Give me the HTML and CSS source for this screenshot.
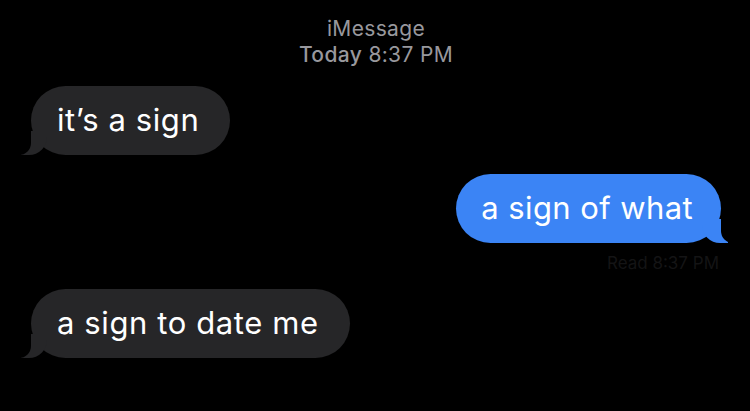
FILE: index.html
```html
<!DOCTYPE html>
<html lang="en">
<head>
<meta charset="utf-8">
<title>iMessage</title>
<link rel="stylesheet" href="styles.css">
</head>
<body>
<div class="thread">
  <header class="meta">
    <div class="service">iMessage</div>
    <div class="time"><span class="day">Today</span> 8:37 PM</div>
  </header>
  <div class="row in first">
    <div class="bubble gray">it’s a sign</div>
  </div>
  <div class="row out">
    <div class="bubble blue">a sign of what</div>
  </div>
  <div class="receipt">Read 8:37 PM</div>
  <div class="row in last">
    <div class="bubble gray">a sign to date me</div>
  </div>
</div>
</body>
</html>
```
FILE: styles.css
```css
html, body {
  margin: 0;
  padding: 0;
  background: #000;
}
body {
  width: 750px;
  height: 411px;
  overflow: hidden;
  font-family: Inter, "Noto Sans", "Liberation Sans", sans-serif;
  color: #fff;
}
.thread {
  display: flex;
  flex-direction: column;
  padding: 0 29px 0 31px;
}
.meta {
  display: flex;
  flex-direction: column;
  align-items: center;
  padding-top: 16px;
  color: #98989d;
  font-size: 21px;
  line-height: 26px;
  letter-spacing: 0.35px;
}
.time .day {
  font-weight: 500;
}
.row {
  display: flex;
}
.row.in { justify-content: flex-start; }
.row.out { justify-content: flex-end; margin-top: 19px; }
.row.first { margin-top: 18px; }
.row.last { margin-top: 16px; }
.bubble {
  position: relative;
  height: 69px;
  display: flex;
  align-items: center;
  padding: 0 31px 2px 26px;
  border-radius: 35px;
  font-size: 31px;
  letter-spacing: 0.6px;
  box-sizing: border-box;
}
.bubble.gray { background: #262628; }
.bubble.blue {
  background: #3b84f5;
  padding: 0 28px 2px 25px;
  letter-spacing: 0.4px;
}
.bubble.gray::before {
  content: "";
  position: absolute;
  bottom: 0;
  left: -10px;
  width: 26px;
  height: 24px;
  background: #262628;
  border-bottom-right-radius: 18px;
}
.bubble.gray::after {
  content: "";
  position: absolute;
  bottom: 0;
  left: -20px;
  width: 20px;
  height: 24px;
  background: #000;
  border-bottom-right-radius: 12px;
}
.bubble.blue::before {
  content: "";
  position: absolute;
  bottom: 0;
  right: -7px;
  width: 26px;
  height: 24px;
  background: #3b84f5;
  border-bottom-left-radius: 18px;
}
.bubble.blue::after {
  content: "";
  position: absolute;
  bottom: 0;
  right: -17px;
  width: 17px;
  height: 24px;
  background: #000;
  border-bottom-left-radius: 12px;
}
.receipt {
  align-self: flex-end;
  margin-top: 10px;
  font-size: 17px;
  line-height: 20px;
  color: #141415;
  padding-right: 2px;
}
</style>
```
